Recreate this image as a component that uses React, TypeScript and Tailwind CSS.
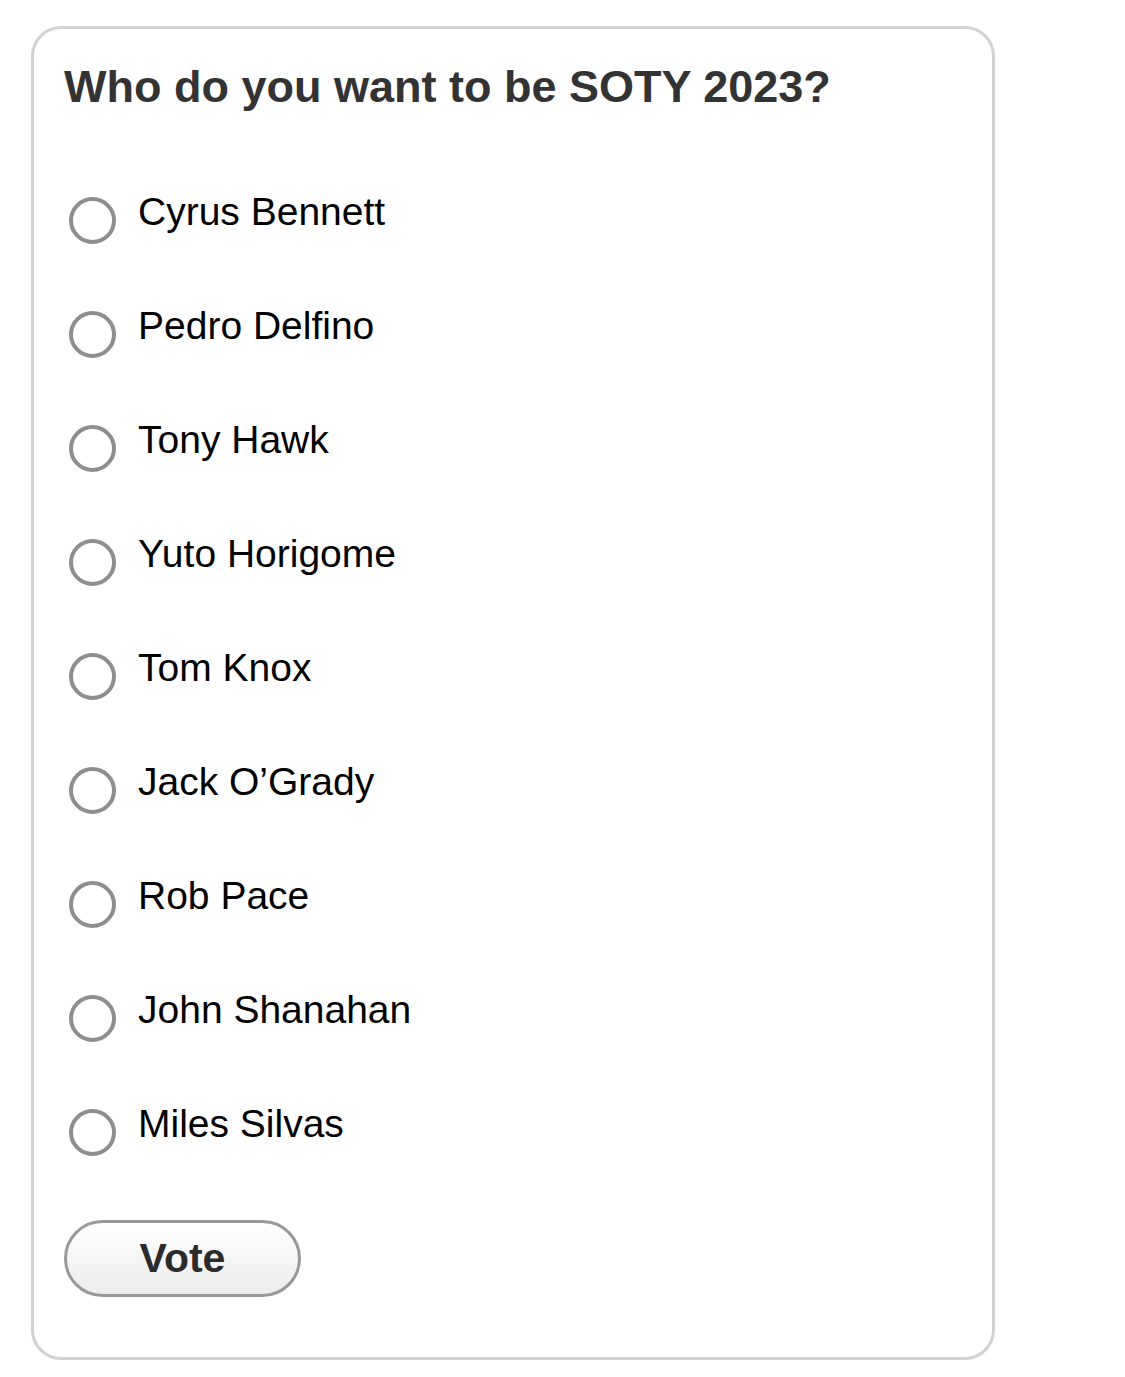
import React from "react";

const names = [
  "Cyrus Bennett",
  "Pedro Delfino",
  "Tony Hawk",
  "Yuto Horigome",
  "Tom Knox",
  "Jack O’Grady",
  "Rob Pace",
  "John Shanahan",
  "Miles Silvas",
];

export default function App() {
  return (
    <div className="min-h-[1377px] w-[1125px] bg-white pl-[31px] pt-[26px] [font-family:'Liberation_Sans',Arial,sans-serif]">
      <div className="w-[964px] h-[1334px] rounded-[30px] border-[3px] border-[#d2d2d2] pl-[30px] pt-[32px]">
        <h1 className="text-[45px] leading-[52px] font-bold text-[#333333]">Who do you want to be SOTY 2023?</h1>
        <div className="mt-[76px] flex flex-col gap-[68px]">
          {names.map((n) => (
            <label key={n} className="flex items-start h-[46px]">
              <span className="ml-[5px] mt-[8px] w-[47px] h-[47px] rounded-full border-[4px] border-[#8e8e8e] bg-white shrink-0" />
              <span className="ml-[22px] text-[39px] leading-[46px] text-black">{n}</span>
            </label>
          ))}
        </div>
        <button className="mt-[73px] w-[237px] h-[77px] rounded-full border-[3px] border-[#999999] bg-gradient-to-b from-white to-[#ececec] text-[41px] font-bold text-[#2b2b2b] flex items-center justify-center">
          Vote
        </button>
      </div>
    </div>
  );
}
